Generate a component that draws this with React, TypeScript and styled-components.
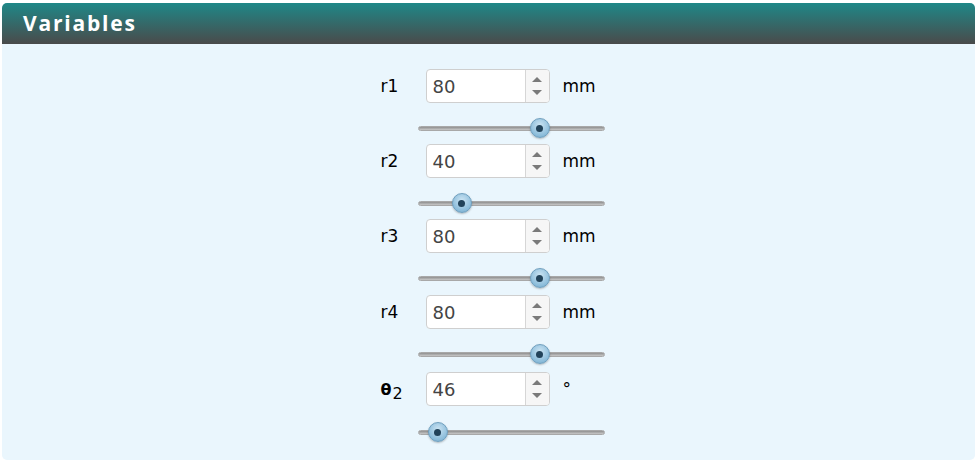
import React from "react";
import styled, { createGlobalStyle } from "styled-components";

const Global = createGlobalStyle`
  html, body { margin: 0; padding: 0; background: #ffffff; }
  body { font-family: "DejaVu Sans", "Noto Sans", sans-serif; }
`;

const Panel = styled.section`
  margin: 3px 2px 0 2px;
  height: 457px;
  display: flex;
  flex-direction: column;
  border-radius: 5px;
  overflow: hidden;
  background: #eaf6fd;
`;

const Header = styled.header`
  height: 41px;
  flex: none;
  display: flex;
  align-items: center;
  padding-left: 21px;
  background: linear-gradient(#1f8888, #4a4a4a);
`;

const Title = styled.h2`
  margin: 0;
  font-family: "Open Sans", sans-serif;
  font-weight: 700;
  font-size: 21px;
  letter-spacing: 1.8px;
  color: #ffffff;
  line-height: 1;
`;

const Body = styled.div`
  flex: 1;
  padding-top: 25px;
`;

const List = styled.div`
  width: 225px;
  margin-left: calc(50% - 109px);
  display: flex;
  flex-direction: column;
`;

const Block = styled.div<{ $gap: number }>`
  display: flex;
  flex-direction: column;
  height: ${(p) => p.$gap}px;
`;

const Row = styled.div`
  display: flex;
  align-items: center;
  height: 34px;
`;

const Label = styled.div`
  width: 46px;
  padding-left: 1px;
  box-sizing: border-box;
  font-family: "DejaVu Sans", sans-serif;
  font-size: 17px;
  color: #000;
  display: flex;
  align-items: baseline;
`;

const Theta = styled.span`
  font-weight: 700;
  font-size: 16px;
`;

const Sub = styled.span`
  font-size: 16px;
  position: relative;
  top: 4px;
  margin-left: 1px;
`;

const InputBox = styled.div`
  width: 122px;
  height: 32px;
  border: 1px solid #cfcfcf;
  border-radius: 4px;
  background: #fff;
  display: flex;
  overflow: hidden;
`;

const Value = styled.div`
  flex: 1;
  padding-left: 6px;
  display: flex;
  align-items: center;
  font-family: "DejaVu Sans", sans-serif;
  font-size: 18px;
  color: #444;
`;

const Spin = styled.div`
  width: 23px;
  border-left: 1px solid #d6d6d6;
  background: #f6f6f6;
  display: flex;
  flex-direction: column;
  align-items: center;
  justify-content: center;
  gap: 8px;
`;

const Arrow = styled.span<{ $up?: boolean }>`
  width: 0;
  height: 0;
  border-left: 5px solid transparent;
  border-right: 5px solid transparent;
  ${(p) =>
    p.$up
      ? "border-bottom: 5px solid #7a7a7a;"
      : "border-top: 5px solid #7a7a7a;"}
`;

const Unit = styled.div`
  margin-left: 13px;
  font-family: "DejaVu Sans", sans-serif;
  font-size: 17px;
  color: #000;
`;

const SliderWrap = styled.div<{ $top: number }>`
  margin-left: 38px;
  margin-top: ${(p) => p.$top}px;
  width: 187px;
  height: 20px;
  position: relative;
  display: flex;
  align-items: center;
`;

const Track = styled.div`
  width: 100%;
  height: 5px;
  box-sizing: border-box;
  border-radius: 3px;
  border: 1px solid #a8a8a8;
  background: linear-gradient(#8f8f8f, #c8c8c8);
`;

const Thumb = styled.div`
  position: absolute;
  top: 0;
  width: 20px;
  height: 20px;
  margin-left: -10px;
  border-radius: 50%;
  box-sizing: border-box;
  border: 1px solid #6f9fbe;
  background: radial-gradient(circle at 50% 35%, #cbe4f3, #8bbcda 70%, #74a8ca);
  box-shadow: 0 1px 2px rgba(0, 0, 0, 0.25);
  display: flex;
  align-items: center;
  justify-content: center;
  &::after {
    content: "";
    width: 7px;
    height: 7px;
    border-radius: 50%;
    background: #22435a;
  }
`;

type V = { key: string; label: React.ReactNode; value: string; unit: string; pos: number; gap: number; top: number };

const vars: V[] = [
  { key: "r1", label: "r1", value: "80", unit: "mm", pos: 122, gap: 75, top: 15 },
  { key: "r2", label: "r2", value: "40", unit: "mm", pos: 44, gap: 75, top: 15 },
  { key: "r3", label: "r3", value: "80", unit: "mm", pos: 122, gap: 76, top: 15 },
  { key: "r4", label: "r4", value: "80", unit: "mm", pos: 122, gap: 77, top: 15 },
  {
    key: "t2",
    label: (
      <>
        <Theta>θ</Theta>
        <Sub>2</Sub>
      </>
    ),
    value: "46",
    unit: "°",
    pos: 20,
    gap: 80,
    top: 16,
  },
];

export default function App() {
  return (
    <>
      <Global />
      <Panel>
        <Header>
          <Title>Variables</Title>
        </Header>
        <Body>
          <List>
            {vars.map((v) => (
              <Block key={v.key} $gap={v.gap}>
                <Row>
                  <Label>{v.label}</Label>
                  <InputBox>
                    <Value>{v.value}</Value>
                    <Spin>
                      <Arrow $up />
                      <Arrow />
                    </Spin>
                  </InputBox>
                  <Unit>{v.unit}</Unit>
                </Row>
                <SliderWrap $top={v.top}>
                  <Track />
                  <Thumb style={{ left: `${v.pos}px` }} />
                </SliderWrap>
              </Block>
            ))}
          </List>
        </Body>
      </Panel>
    </>
  );
}
